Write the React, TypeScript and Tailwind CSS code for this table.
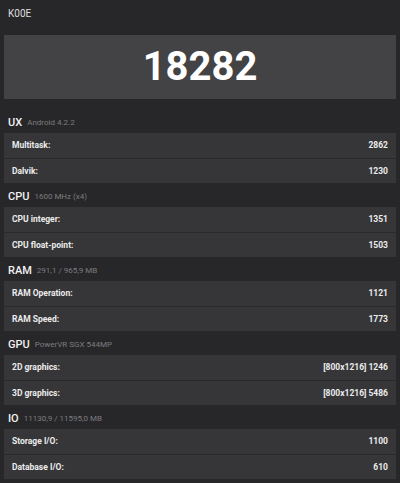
import React from "react";

type Row = { label: string; value: string };
type Section = { title: string; info: string; rows: Row[] };

const sections: Section[] = [
  {
    title: "UX",
    info: "Android 4.2.2",
    rows: [
      { label: "Multitask:", value: "2862" },
      { label: "Dalvik:", value: "1230" },
    ],
  },
  {
    title: "CPU",
    info: "1600 MHz (x4)",
    rows: [
      { label: "CPU integer:", value: "1351" },
      { label: "CPU float-point:", value: "1503" },
    ],
  },
  {
    title: "RAM",
    info: "291,1 / 965,9 MB",
    rows: [
      { label: "RAM Operation:", value: "1121" },
      { label: "RAM Speed:", value: "1773" },
    ],
  },
  {
    title: "GPU",
    info: "PowerVR SGX 544MP",
    rows: [
      { label: "2D graphics:", value: "[800x1216] 1246" },
      { label: "3D graphics:", value: "[800x1216] 5486" },
    ],
  },
  {
    title: "IO",
    info: "11130,9 / 11595,0 MB",
    rows: [
      { label: "Storage I/O:", value: "1100" },
      { label: "Database I/O:", value: "610" },
    ],
  },
];

const SectionBlock = ({ section, first }: { section: Section; first: boolean }) => (
  <div>
    <div className={`flex items-end gap-[5px] px-[8px] h-[24px] pb-[5px] ${first ? "mt-[10px]" : ""}`}>
      <span className="text-[11px] leading-none font-medium text-[#f2f2f2]">{section.title}</span>
      <span className="text-[8px] leading-none text-[#7c7c7e] mb-[1px]">{section.info}</span>
    </div>
    <div className="mx-[4px] bg-[#363638]">
      {section.rows.map((row, i) => (
        <div
          key={row.label}
          className={`flex items-center justify-between px-[8px] h-[25px] ${i > 0 ? "border-t border-[#2a2a2c]" : ""}`}
        >
          <span className="text-[8.5px] font-bold text-[#ececec]">{row.label}</span>
          <span className="text-[8.5px] font-bold text-[#ececec]">{row.value}</span>
        </div>
      ))}
    </div>
  </div>
);

export default function App() {
  return (
    <div className="w-[400px] h-[483px] bg-[#27272a] overflow-hidden" style={{ fontFamily: "Roboto, 'Liberation Sans', sans-serif" }}>
      <div className="h-[26px] flex items-center px-[8px]">
        <span className="text-[10px] text-[#dedede]">K00E</span>
      </div>
      <div className="mx-[4px] mt-[9px] h-[64px] bg-[#434345] flex items-center justify-center">
        <span className="text-[40px] font-bold text-white leading-none">18282</span>
      </div>
      {sections.map((s, i) => (
        <SectionBlock key={s.title} section={s} first={i === 0} />
      ))}
    </div>
  );
}
